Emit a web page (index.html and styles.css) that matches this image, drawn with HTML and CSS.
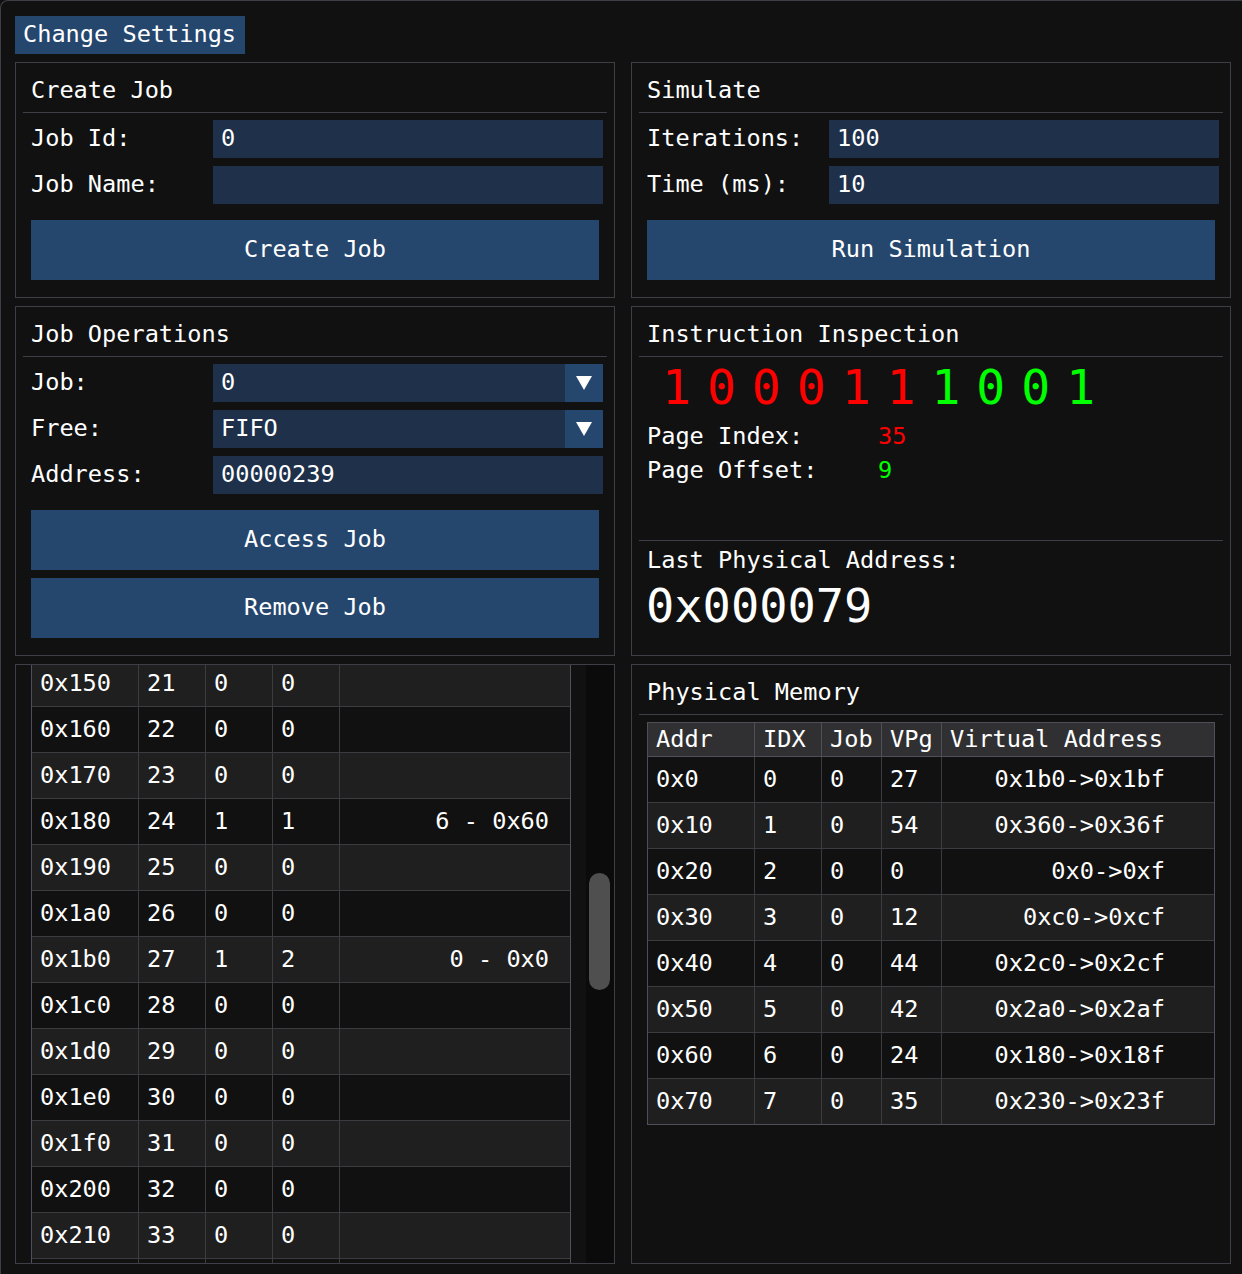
FILE: index.html
```html
<!DOCTYPE html>
<html>
<head>
<meta charset="utf-8">
<link rel="stylesheet" href="styles.css">
</head>
<body>
<div class="window">
  <div class="top-btn">Change Settings</div>
  <div class="grid">
    <section class="panel">
      <div class="panel-title">Create Job</div>
      <div class="sep"></div>
      <div class="form">
        <div class="row"><span class="label">Job Id:</span><div class="input">0</div></div>
        <div class="row"><span class="label">Job Name:</span><div class="input"></div></div>
        <div class="btn first">Create Job</div>
      </div>
    </section>
    <section class="panel">
      <div class="panel-title">Simulate</div>
      <div class="sep"></div>
      <div class="form">
        <div class="row"><span class="label">Iterations:</span><div class="input">100</div></div>
        <div class="row"><span class="label">Time (ms):</span><div class="input">10</div></div>
        <div class="btn first">Run Simulation</div>
      </div>
    </section>
    <section class="panel">
      <div class="panel-title">Job Operations</div>
      <div class="sep"></div>
      <div class="form">
        <div class="row"><span class="label">Job:</span><div class="input combo"><span class="combo-text">0</span><span class="arrow"><svg width="18" height="16" viewBox="0 0 18 16"><path d="M1 1 H17 L9 15 Z" fill="#fff"/></svg></span></div></div>
        <div class="row"><span class="label">Free:</span><div class="input combo"><span class="combo-text">FIFO</span><span class="arrow"><svg width="18" height="16" viewBox="0 0 18 16"><path d="M1 1 H17 L9 15 Z" fill="#fff"/></svg></span></div></div>
        <div class="row"><span class="label">Address:</span><div class="input">00000239</div></div>
        <div class="btn first">Access Job</div>
        <div class="btn">Remove Job</div>
      </div>
    </section>
    <section class="panel">
      <div class="panel-title">Instruction Inspection</div>
      <div class="sep"></div>
      <div class="bits">
        <span class="red">1</span><span class="red">0</span><span class="red">0</span><span class="red">0</span><span class="red">1</span><span class="red">1</span><span class="green">1</span><span class="green">0</span><span class="green">0</span><span class="green">1</span>
      </div>
      <div class="kv">
        <span>Page Index:</span><span class="red">35</span>
        <span>Page Offset:</span><span class="green">9</span>
      </div>
      <div class="sep sep-last"></div>
      <div class="last-label">Last Physical Address:</div>
      <div class="big">0x000079</div>
    </section>
    <section class="panel scroll-panel">
      <div class="ltable">
        <div class="trow alt"><span>0x150</span><span>21</span><span>0</span><span>0</span><span class="r"></span></div>
        <div class="trow"><span>0x160</span><span>22</span><span>0</span><span>0</span><span class="r"></span></div>
        <div class="trow alt"><span>0x170</span><span>23</span><span>0</span><span>0</span><span class="r"></span></div>
        <div class="trow"><span>0x180</span><span>24</span><span>1</span><span>1</span><span class="r">6 - 0x60</span></div>
        <div class="trow alt"><span>0x190</span><span>25</span><span>0</span><span>0</span><span class="r"></span></div>
        <div class="trow"><span>0x1a0</span><span>26</span><span>0</span><span>0</span><span class="r"></span></div>
        <div class="trow alt"><span>0x1b0</span><span>27</span><span>1</span><span>2</span><span class="r">0 - 0x0</span></div>
        <div class="trow"><span>0x1c0</span><span>28</span><span>0</span><span>0</span><span class="r"></span></div>
        <div class="trow alt"><span>0x1d0</span><span>29</span><span>0</span><span>0</span><span class="r"></span></div>
        <div class="trow"><span>0x1e0</span><span>30</span><span>0</span><span>0</span><span class="r"></span></div>
        <div class="trow alt"><span>0x1f0</span><span>31</span><span>0</span><span>0</span><span class="r"></span></div>
        <div class="trow"><span>0x200</span><span>32</span><span>0</span><span>0</span><span class="r"></span></div>
        <div class="trow alt"><span>0x210</span><span>33</span><span>0</span><span>0</span><span class="r"></span></div>
        <div class="trow"><span></span><span></span><span></span><span></span><span class="r"></span></div>
      </div>
      <div class="scrollbar"><div class="grab"></div></div>
    </section>
    <section class="panel">
      <div class="panel-title">Physical Memory</div>
      <div class="sep"></div>
      <div class="ptable">
        <div class="prow head"><span>Addr</span><span>IDX</span><span>Job</span><span>VPg</span><span>Virtual Address</span></div>
        <div class="prow"><span>0x0</span><span>0</span><span>0</span><span>27</span><span class="r">0x1b0-&gt;0x1bf</span></div>
        <div class="prow alt"><span>0x10</span><span>1</span><span>0</span><span>54</span><span class="r">0x360-&gt;0x36f</span></div>
        <div class="prow"><span>0x20</span><span>2</span><span>0</span><span>0</span><span class="r">0x0-&gt;0xf</span></div>
        <div class="prow alt"><span>0x30</span><span>3</span><span>0</span><span>12</span><span class="r">0xc0-&gt;0xcf</span></div>
        <div class="prow"><span>0x40</span><span>4</span><span>0</span><span>44</span><span class="r">0x2c0-&gt;0x2cf</span></div>
        <div class="prow alt"><span>0x50</span><span>5</span><span>0</span><span>42</span><span class="r">0x2a0-&gt;0x2af</span></div>
        <div class="prow"><span>0x60</span><span>6</span><span>0</span><span>24</span><span class="r">0x180-&gt;0x18f</span></div>
        <div class="prow alt last"><span>0x70</span><span>7</span><span>0</span><span>35</span><span class="r">0x230-&gt;0x23f</span></div>
      </div>
    </section>
  </div>
</div>
</body>
</html>
```
FILE: styles.css
```css
html, body {
  margin: 0;
  padding: 0;
  background: #111111;
}
body {
  font-family: "DejaVu Sans Mono", "Liberation Mono", monospace;
  font-size: 23.6px;
  color: #ffffff;
}
.window {
  height: 1274px;
  box-sizing: border-box;
  border-top: 1px solid #3e3e46;
  border-left: 1px solid #3e3e46;
  border-top-left-radius: 8px;
  padding: 15px 0 0 14px;
  overflow: hidden;
}
.top-btn {
  display: inline-block;
  height: 38px;
  line-height: 37px;
  padding: 0 9px 0 8px;
  background: #25476e;
  white-space: nowrap;
}
.grid {
  margin-top: 8px;
  display: grid;
  grid-template-columns: 600px 600px;
  grid-template-rows: 236px 350px 600px;
  column-gap: 16px;
  row-gap: 8px;
}
.panel {
  border: 1px solid #3e3e46;
  box-sizing: border-box;
  padding: 8px 7px;
}
.panel-title {
  height: 38px;
  line-height: 39px;
  padding-left: 8px;
  white-space: nowrap;
}
.sep {
  height: 1px;
  background: #3e3e46;
  margin-top: 3px;
}
.form {
  margin-top: 7px;
  padding-left: 8px;
  display: flex;
  flex-direction: column;
  gap: 8px;
}
.row {
  display: grid;
  grid-template-columns: 182px 390px;
  height: 38px;
  align-items: start;
}
.label {
  line-height: 37px;
  white-space: nowrap;
}
.input {
  height: 38px;
  line-height: 37px;
  background: #1e304a;
  padding-left: 8px;
  box-sizing: border-box;
  white-space: nowrap;
}
.combo {
  display: flex;
  padding-left: 0;
}
.combo-text {
  flex: 1;
  padding-left: 8px;
}
.arrow {
  width: 38px;
  height: 38px;
  background: #25476e;
  display: flex;
  align-items: center;
  justify-content: center;
}
.btn {
  width: 568px;
  height: 60px;
  line-height: 59px;
  text-align: center;
  background: #25476e;
  white-space: nowrap;
}
.btn.first {
  margin-top: 8px;
}
.bits {
  margin-top: 6px;
  padding-left: 23px;
  height: 48px;
  display: flex;
  gap: 16px;
  font-size: 48px;
  line-height: 48px;
}
.red { color: #ff0000; }
.green { color: #00ff00; }
.kv {
  margin-top: 8px;
  padding-left: 8px;
  display: grid;
  grid-template-columns: 231px auto;
  line-height: 34px;
  white-space: nowrap;
}
.sep-last {
  margin-top: 53px;
}
.last-label {
  margin-top: 2px;
  padding-left: 8px;
  line-height: 34px;
  white-space: nowrap;
}
.big {
  margin-top: 3px;
  padding-left: 7px;
  font-size: 47px;
  line-height: 52px;
}
.scroll-panel {
  position: relative;
  overflow: hidden;
  padding: 0;
}
.ltable {
  margin-top: -5px;
  margin-left: 15px;
  width: 540px;
  border-left: 1px solid #4f4f59;
  border-right: 1px solid #4f4f59;
  border-top: 1px solid #3b3b40;
  box-sizing: border-box;
}
.trow {
  display: grid;
  grid-template-columns: 107px 67px 67px 67px 1fr;
  height: 46px;
  border-bottom: 1px solid #3b3b40;
  box-sizing: border-box;
}
.trow span, .prow span {
  border-right: 1px solid #3b3b40;
  padding-left: 8px;
  line-height: 45px;
  white-space: nowrap;
}
.prow span {
  line-height: 44px;
}
.trow span:last-child, .prow span:last-child {
  border-right: none;
}
.trow span.r {
  text-align: right;
  padding-right: 21px;
}
.alt {
  background: #1f1f1f;
}
.scrollbar {
  position: absolute;
  top: 0;
  bottom: 0;
  right: 0;
  width: 28px;
  background: #0b0b0b;
}
.grab {
  position: absolute;
  left: 3px;
  top: 208px;
  width: 21px;
  height: 117px;
  border-radius: 11px;
  background: #4f4f4f;
}
.ptable {
  margin-top: 7px;
  margin-left: 8px;
  width: 568px;
  border: 1px solid #4f4f59;
  box-sizing: border-box;
}
.prow {
  display: grid;
  grid-template-columns: 107px 67px 60px 60px 1fr;
  height: 46px;
  border-bottom: 1px solid #3b3b40;
  box-sizing: border-box;
}
.prow.head {
  height: 34px;
  background: #303033;
  border-bottom: 1px solid #4f4f59;
}
.prow.head span {
  line-height: 32px;
  border-right-color: #4f4f59;
}
.prow.last {
  height: 45px;
  border-bottom: none;
}
.prow span.r {
  text-align: right;
  padding-right: 49px;
}
```
